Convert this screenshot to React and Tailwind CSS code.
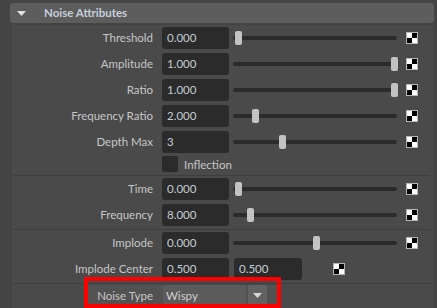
import React from "react";

const attrs = [
  { label: "Threshold", value: "0.000", pos: 0 },
  { label: "Amplitude", value: "1.000", pos: 1 },
  { label: "Ratio", value: "1.000", pos: 1 },
  { label: "Frequency Ratio", value: "2.000", pos: 0.11 },
  { label: "Depth Max", value: "3", pos: 0.28 },
];

function Checker() {
  return (
    <div className="grid h-[12px] w-[12px] grid-cols-2 border border-[#b4b4b4]">
      <div className="bg-white" />
      <div className="bg-black" />
      <div className="bg-black" />
      <div className="bg-white" />
    </div>
  );
}

function Slider({ pos }) {
  return (
    <div className="relative ml-[4px] flex h-[14px] w-[164px] items-center">
      <div className="h-[4px] w-full rounded-full bg-[#2b2b2b]" />
      <div
        className="absolute top-0 h-[14px] w-[7px] rounded-[2px] bg-[#c3c3c3]"
        style={{ left: 2 + pos * 156 }}
      />
    </div>
  );
}

function Field({ value, className = "" }) {
  return (
    <div className={`flex h-[22px] w-[67px] items-center rounded-[3px] bg-[#2b2b2b] pl-[5px] text-[#c3cbd3] ${className}`}>
      {value}
    </div>
  );
}

function Label({ children }) {
  return <div className="w-[141px] text-right text-[#c6c6c6]">{children}</div>;
}

function SliderRow({ label, value, pos }) {
  return (
    <div className="flex h-[26px] items-center">
      <Label>{label}</Label>
      <Field value={value} className="ml-[9px]" />
      <Slider pos={pos} />
      <div className="ml-[9px]">
        <Checker />
      </div>
    </div>
  );
}

function Separator({ className = "" }) {
  return <div className={`ml-[1px] h-px w-[417px] bg-[#3e3e3e] ${className}`} />;
}

export default function App() {
  return (
    <div className="relative h-[308px] w-[437px] overflow-hidden bg-[#444444] pl-[10px] pt-[3px] font-[family-name:Lato,sans-serif] text-[11.5px] leading-none">
      {/* section header */}
      <div className="flex h-[20px] w-[424px] items-center rounded-[3px] bg-[#5d5d5d]">
        <svg className="ml-[7px]" width="9" height="5" viewBox="0 0 9 5">
          <path d="M0 0H9L4.5 5Z" fill="#e2e2e2" />
        </svg>
        <span className="ml-[18px] font-bold text-[#c4cfd9]">Noise Attributes</span>
      </div>

      <div className="ml-[2px] mt-[2px] h-[290px] w-[421px] bg-[#4a4a4a]">
        {attrs.map((a) => (
          <SliderRow key={a.label} {...a} />
        ))}

        <div className="flex h-[20px] items-start pt-[1px]">
          <div className="ml-[150px] h-[16px] w-[16px] rounded-[2px] bg-[#2b2b2b]" />
          <span className="ml-[6px] mt-[3px] text-[#c6c6c6]">Inflection</span>
        </div>
        <Separator />

        <SliderRow label="Time" value="0.000" pos={0} />
        <SliderRow label="Frequency" value="8.000" pos={0.077} />
        <Separator className="mt-px" />

        <SliderRow label="Implode" value="0.000" pos={0.5} />
        <div className="flex h-[26px] items-center">
          <Label>Implode Center</Label>
          <Field value="0.500" className="ml-[9px]" />
          <Field value="0.500" className="ml-[5px] w-[68px] text-[#9fb8d0]" />
          <div className="ml-[31px]">
            <Checker />
          </div>
        </div>
        <Separator className="mt-px" />

        <div className="ml-[76px] mt-px flex h-[21px] w-[189px] items-center bg-[#525252]">
          <div className="w-[65px] text-right text-[#c6c6c6]">Noise Type</div>
          <div className="ml-[10px] flex h-[21px] w-[83px] items-center rounded-[2px] bg-[#5b5b5b] pl-[3px] text-[#d0d0d0]">
            Wispy
          </div>
          <div className="ml-[2px] flex h-[21px] w-[19px] items-center justify-center rounded-[2px] bg-[#626262]">
            <svg width="9" height="5" viewBox="0 0 9 5">
              <path d="M0 0H9L4.5 5Z" fill="#d8d8d8" />
            </svg>
          </div>
        </div>
      </div>

      {/* red highlight annotation */}
      <div className="absolute left-[84px] top-[277px] h-[31px] w-[197px] border-4 border-[#ff0000]" />
    </div>
  );
}
